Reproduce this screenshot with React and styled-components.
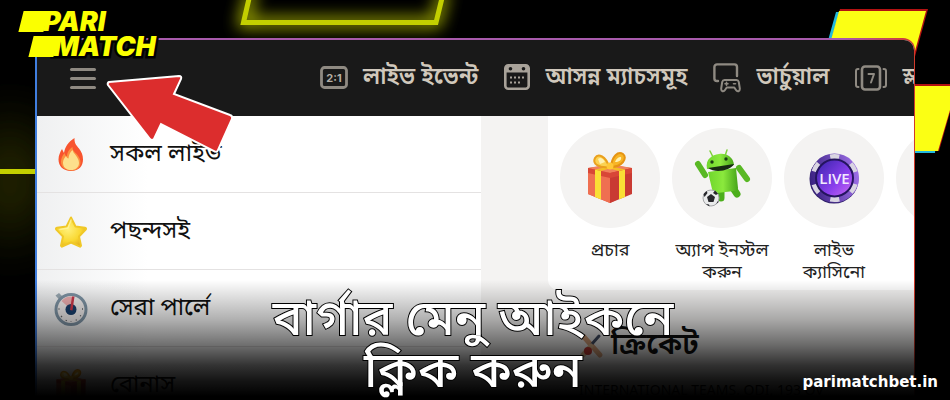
import React from "react";
import styled, { createGlobalStyle, css } from "styled-components";

const GlobalStyle = createGlobalStyle`
  * {
    box-sizing: border-box;
  }

  body {
    margin: 0;
    background: #000;
    font-family: "Noto Sans Bengali", "Noto Sans", "Open Sans", sans-serif;
  }

  ul {
    list-style: none;
    margin: 0;
    padding: 0;
  }

  a {
    color: inherit;
    text-decoration: none;
  }
`;

const Backdrop = () => (
  <BackdropArt viewBox="0 0 950 400" preserveAspectRatio="none" aria-hidden="true">
    <defs>
      <filter id="neon" x="-50%" y="-50%" width="200%" height="200%">
        <feGaussianBlur stdDeviation="8" />
      </filter>
      <filter id="haze" x="-100%" y="-100%" width="300%" height="300%">
        <feGaussianBlur stdDeviation="28" />
      </filter>
    </defs>
    <rect width="950" height="400" fill="#000" />
    <ellipse cx="10" cy="180" rx="34" ry="60" fill="#3a3c00" opacity="0.7" filter="url(#haze)" />
    <g fill="none" stroke="#c3cf00">
      <path d="M252-10 243.500 22.500H436L444-10" strokeWidth="10" filter="url(#neon)" opacity="0.9" />
      <path d="M251-10 243.500 22.500H436L444-10" strokeWidth="5" />
      <path d="M0 171.500H60" strokeWidth="5" />
    </g>
    <path d="M836 12 822 62H860V12Z" fill="#23b9dd" />
    <path d="M840 9H928L914 60H826Z" fill="#b31212" />
    <path d="M839 11H926L912 62H825Z" fill="#fbff14" />
    <path d="M900 84H958L939 151H900Z" fill="#b31212" />
    <path d="M900 120H937L935 153H900Z" fill="#23b9dd" />
    <path d="M900 86H957L938 151H900Z" fill="#fbff14" />
  </BackdropArt>
);

const ScoreIcon = () => (
  <svg width="28" height="24" viewBox="0 0 28 24" fill="none">
    <rect x="1.500" y="1.500" width="25" height="20" rx="3" stroke="#8f8a82" strokeWidth="2.800" />
    <text x="14" y="15.500" textAnchor="middle" fontFamily="Inter, sans-serif" fontSize="11" fontWeight="700" fill="#b5afa5">
      2:1
    </text>
  </svg>
);

const CalendarIcon = () => (
  <svg width="26" height="28" viewBox="0 0 26 28" fill="none">
    <rect x="1.300" y="1.300" width="23.400" height="23.400" rx="3" stroke="#a8a299" strokeWidth="2.600" />
    <path d="M1 8.500V4.500A3.500 3.500 0 0 1 4.500 1h17A3.500 3.500 0 0 1 25 4.500v4Z" fill="#a8a299" />
    <circle cx="6.500" cy="4.800" r="1.800" fill="#191919" />
    <circle cx="19.500" cy="4.800" r="1.800" fill="#191919" />
    <path d="M6 13.500h2m2 0h2m2 0h2m2 0h2M6 18.500h2m2 0h2m2 0h2" stroke="#a8a299" strokeWidth="2" />
  </svg>
);

const VirtualIcon = () => (
  <svg width="28" height="30" viewBox="0 0 28 30" fill="none" stroke="#8f8a82" strokeWidth="2.400" strokeLinecap="round" strokeLinejoin="round">
    <path d="M5 18H4a2.600 2.600 0 0 1-2.600-2.600V4A2.600 2.600 0 0 1 4 1.400h17.500A2.600 2.600 0 0 1 24 4v9" />
    <path d="M11.500 17h12c1.300 0 2 .800 2.300 2l1 6.500c.300 3-2.500 3.700-3.800 1.500l-1.700-2.500h-7.600L12 27c-1.300 2.200-4.100 1.500-3.800-1.500l1-6.500c.300-1.200 1-2 2.300-2Z" strokeWidth="2" />
    <path d="M12 20.800h3m-1.500-1.500v3M20.500 20.800h2" strokeWidth="1.600" />
  </svg>
);

const SlotIcon = () => (
  <svg width="32" height="26" viewBox="0 0 32 26" fill="none" stroke="#8f8a82" strokeLinecap="round">
    <rect x="7" y="1.500" width="18" height="23" rx="3" strokeWidth="2.600" />
    <path d="M3.500 4H3a2 2 0 0 0-2 2v14a2 2 0 0 0 2 2h.500M28.500 4h.500a2 2 0 0 1 2 2v14a2 2 0 0 1-2 2h-.500" strokeWidth="2" />
    <path d="M13.500 9H19l-3 8.500" strokeWidth="2" strokeLinejoin="round" />
  </svg>
);

const FireIcon = () => (
  <svg width="34" height="34" viewBox="0 0 34 34">
    <path d="M17 33C9 33 4.500 28 4.500 21.500c0-4 1.700-7.500 3.500-10.500.800 1.200 1.200 2.600 2 4C11 8.500 14.500 4 20.500 0c-.300 5.500 2 7.500 4.500 10.500 2.500 3.200 4 6.500 4 11C29 28 25 33 17 33Z" fill="#f8542e" />
    <path d="M17 32.500c-6 0-10-3.700-10-9 0-3.200 1.500-6 3.500-8.500.500 1.500 1 3 2.500 3.500C13 14 15.500 11 18.500 9c0 4 3 5.500 5 8 1.700 2.200 3 4.500 3 7.200 0 5-3.500 8.300-9.500 8.300Z" fill="#fb9140" />
    <path d="M17 32c-5 0-8-3-8-7.300 0-2.700 1.500-5 3-6.700.500 1.500 1.500 2.500 2.500 2.500.300-3.500 1.500-6.500 4-8.500.500 3.500 6.500 7 6.500 13 0 4.300-3.500 7-8 7Z" fill="#fddf8c" />
  </svg>
);

const StarIcon = () => (
  <svg width="34" height="34" viewBox="0 0 34 34">
    <defs>
      <radialGradient id="starFill" cx="0.4" cy="0.4" r="0.7">
        <stop offset="0" stopColor="#fff07a" />
        <stop offset="0.6" stopColor="#f9d832" />
        <stop offset="1" stopColor="#e0a71b" />
      </radialGradient>
    </defs>
    <path d="M17 2.500l4.500 9 9.500 1.200c1 .2 1.400 1.200.700 1.900L25 21.500l2 9.300-1 .900L17 27.500l-9 4.200-1-.900 2-9.300-6.700-6.900c-.700-.700-.300-1.700.700-1.900L12.500 11.500Z" fill="url(#starFill)" stroke="#f0c828" strokeWidth="2" strokeLinejoin="round" />
    <path d="M17 5l-3 8-8 1.500" fill="none" stroke="#fff6a6" strokeWidth="1.500" strokeLinecap="round" opacity="0.7" />
  </svg>
);

const WatchIcon = () => (
  <svg width="34" height="34" viewBox="0 0 34 34">
    <path d="M1.500 3.500 5 1l4 4-3.500 3Z" fill="#9aa9b3" />
    <circle cx="17" cy="17.500" r="15" fill="#f1eeee" stroke="#7e94a5" strokeWidth="3" />
    <path d="M17 17.500 7.500 9A13 13 0 0 1 19 4.700Z" fill="#efb0b2" />
    <path d="M7 24l1 1m4 4 .500-1M17 29.500V29m5.500-.500-.500-1m5-3.500-1-.500M4.500 17h1M29 17h-1" stroke="#5e6265" strokeWidth="1.300" />
    <circle cx="17" cy="17.500" r="5.500" fill="#183e6b" />
    <path d="M18 4.500h2.500L18.500 18.500l-2.500-.500Z" fill="#cc3649" />
  </svg>
);

const GiftIcon = ({ size = 34 }) => (
  <svg width={size} height={size} viewBox="0 0 52 52">
    <path d="M4 16 26 13l22 3v24L26 51 4 42Z" fill="#df4b3b" />
    <path d="M4 16 26 21v30L4 42Z" fill="#ef6f51" />
    <path d="M26 21 48 16v26L26 51Z" fill="#c93a33" />
    <path d="M4 16 26 12l22 4-22 5Z" fill="#f0805c" />
    <path d="M4 16 26 21 48 16v5L26 26 4 21Z" fill="#d84637" />
    <path d="M11 17.500 17 19v28.500L11 45ZM35 19l6-1.500V45l-6 2.500Z" fill="#fadf35" />
    <path d="M11 17.500 30 13.500h6L17 19ZM35 19 18 14.500l5-1L41 17.500Z" fill="#f4bd25" />
    <path d="M25 15C15 16 8 12 11 6c3-5 11-2 14 9Z" fill="#fbd252" stroke="#eaa01d" strokeWidth="2" />
    <path d="M27 15C28 4 34-1 39 2c5 4-1 13-12 13Z" fill="#f7b527" stroke="#e59413" strokeWidth="2" />
    <path d="M14 7c2-2 5-1 7 3l-5 2ZM31 10c1-3 3-5 6-5 1 3-2 5-6 5Z" fill="#fff1b0" />
    <circle cx="26" cy="14" r="3.500" fill="#ffc837" />
  </svg>
);

const RobotIcon = () => (
  <svg width="58" height="60" viewBox="0 0 58 60">
    <defs>
      <linearGradient id="robot" x2="1">
        <stop offset="0" stopColor="#6fd62c" />
        <stop offset="0.5" stopColor="#8be93d" />
        <stop offset="1" stopColor="#47a51a" />
      </linearGradient>
    </defs>
    <path d="M17 3 20 9M34 2 32 8" stroke="#7ed13a" strokeWidth="1.500" strokeLinecap="round" />
    <path d="M5 16 12 27M46 20 54 31" stroke="#59b824" strokeWidth="6" strokeLinecap="round" />
    <path d="M28 42V50M40 40l4 6" stroke="#4cae1c" strokeWidth="7" strokeLinecap="round" />
    <path d="M15 24 43 20 45 40Q45 43 41 43L24 45Q20 45 19 41Z" fill="url(#robot)" />
    <path d="M14 21C12 11 19 7 26 6c8-1 14 3 15 11Z" fill="url(#robot)" />
    <path d="M15 20 41 16c-3 6-18 10-26 4Z" fill="#172b12" />
    <circle cx="19" cy="14" r="1.700" fill="#1b3d12" />
    <circle cx="33" cy="11" r="1.700" fill="#1b3d12" />
    <circle cx="18" cy="50" r="8" fill="#e9eaeb" stroke="#a5a6a8" />
    <path d="m18 46 4 3-1.500 5h-5L14 49ZM10.500 46l3-3 1 2-3 4ZM22 42.500l3 3-2 1.500-3-2ZM13 56l3 .500.500 2ZM23 56l2-3 .700 1Z" fill="#27272b" />
  </svg>
);

const ChipIcon = () => (
  <svg width="52" height="52" viewBox="0 0 52 52">
    <defs>
      <linearGradient id="chip" x1="0" y1="0" x2="1" y2="1">
        <stop offset="0.1" stopColor="#4427b5" />
        <stop offset="0.6" stopColor="#8a3fed" />
        <stop offset="1" stopColor="#cf6cf4" />
      </linearGradient>
      <linearGradient id="chipEdge" x1="0" y1="0.5" x2="1" y2="0.3">
        <stop offset="0" stopColor="#3b2283" />
        <stop offset="1" stopColor="#a071ea" />
      </linearGradient>
    </defs>
    <circle cx="26" cy="27" r="24.500" fill="#30206a" />
    <circle cx="26.500" cy="26" r="24.500" fill="url(#chipEdge)" />
    <circle cx="26.500" cy="26" r="21" fill="none" stroke="#d9d5e2" strokeWidth="6" strokeDasharray="9 13" strokeDashoffset="-6" />
    <circle cx="26.500" cy="26" r="18.500" fill="url(#chip)" stroke="#24145f" strokeWidth="2" />
    <text x="26.500" y="31.500" textAnchor="middle" fontFamily="Open Sans, sans-serif" fontSize="15" fontWeight="600" fill="#f2eafe">
      LIVE
    </text>
  </svg>
);

const CricketIcon = () => (
  <svg width="26" height="26" viewBox="0 0 26 26">
    <path d="m5 4 16 18" stroke="#d9a27a" strokeWidth="5" strokeLinecap="round" />
    <path d="M20 3 12 12" stroke="#454f66" strokeWidth="3" strokeLinecap="round" />
    <path d="m12 13-8 9" stroke="#d9b58c" strokeWidth="5" strokeLinecap="round" />
    <circle cx="9" cy="18" r="4" fill="#c43a33" />
  </svg>
);

const Pointer = () => (
  <PointerArt width="136" height="84" viewBox="0 0 136 84" aria-hidden="true">
    <path
      d="M3 8 73 2Q76 2 75 5L68 20 124 41Q127 42 126 45L112 76Q111 79 108 77L55 50 48 65Q46 67 44 65L2 11Q1 9 3 8Z"
      fill="#dc2d2d"
      stroke="#fff"
      strokeWidth="2"
    />
  </PointerArt>
);

const navItems = [
  { label: "লাইভ ইভেন্ট", icon: <ScoreIcon /> },
  { label: "আসন্ন ম্যাচসমূহ", icon: <CalendarIcon /> },
  { label: "ভার্চুয়াল", icon: <VirtualIcon /> },
  { label: "স্লট", icon: <SlotIcon /> },
];

const menuItems = [
  { label: "সকল লাইভ", icon: <FireIcon /> },
  { label: "পছন্দসই", icon: <StarIcon /> },
  { label: "সেরা পার্লে", icon: <WatchIcon /> },
  { label: "বোনাস", icon: <GiftIcon /> },
];

const shortcuts = [
  { label: "প্রচার", icon: <GiftIcon size={52} /> },
  { label: "অ্যাপ ইনস্টল করুন", icon: <RobotIcon /> },
  { label: "লাইভ ক্যাসিনো", icon: <ChipIcon /> },
  { label: "", icon: null },
];

const App = () => {
  return (
    <Banner>
      <GlobalStyle />
      <Backdrop />
      <Frame>
        <Screen>
          <TopBar>
            <BurgerButton type="button" aria-label="Menu">
              <span />
              <span />
              <span />
            </BurgerButton>
            <Nav>
              {navItems.map((item) => (
                <NavLink href="#" key={item.label}>
                  {item.icon}
                  {item.label}
                </NavLink>
              ))}
            </Nav>
          </TopBar>
          <Content>
            <SideMenu>
              {menuItems.map((item) => (
                <li key={item.label}>
                  <MenuLink href="#">
                    {item.icon}
                    {item.label}
                  </MenuLink>
                </li>
              ))}
            </SideMenu>
            <Main>
              <Shortcuts>
                {shortcuts.map((item, index) => (
                  <Shortcut href="#" key={index}>
                    <Circle>{item.icon}</Circle>
                    {item.label}
                  </Shortcut>
                ))}
              </Shortcuts>
              <SportHeading>
                <CricketIcon />
                ক্রিকেট
              </SportHeading>
              <League>INTERNATIONAL TEAMS. ODI, 193 OV</League>
            </Main>
          </Content>
        </Screen>
      </Frame>
      <Pointer />
      <Logo href="#">
        <LogoRow>PARI</LogoRow>
        <LogoRow $indent>MATCH</LogoRow>
      </Logo>
      <Shade />
      <Caption>
        বার্গার মেনু আইকনে
        <br />
        ক্লিক করুন
      </Caption>
      <SiteLink href="#">parimatchbet.in</SiteLink>
    </Banner>
  );
};

const Banner = styled.div`
  position: relative;
  display: flex;
  height: 100vh;
  min-height: 400px;
  padding: 38px 35px 0;
  overflow: hidden;
`;

const BackdropArt = styled.svg`
  position: absolute;
  inset: 0;
  width: 100%;
  height: 100%;
`;

const Frame = styled.div`
  position: relative;
  flex: 1;
  min-width: 0;
  padding: 2px 1px 0 2px;
  border-radius: 0 12px 0 0;
  background: linear-gradient(90deg, #3f7fe0 0, #a85aac 8%, #a85aac 92%, #d23a2a 100%);
`;

const Screen = styled.div`
  display: flex;
  flex-direction: column;
  height: 100%;
  overflow: hidden;
  border-radius: 0 10px 0 0;
  background: #f4f3f2;
`;

const TopBar = styled.header`
  display: flex;
  flex: none;
  align-items: center;
  gap: 224px;
  height: 76px;
  padding-left: 33px;
  background: #191919;
`;

const BurgerButton = styled.button`
  display: flex;
  flex: none;
  flex-direction: column;
  gap: 6px;
  width: 26px;
  padding: 0;
  border: 0;
  background: none;

  span {
    height: 3px;
    border-radius: 2px;
    background: #8f8a82;
  }
`;

const Nav = styled.nav`
  display: flex;
  gap: 26px;
  min-width: 0;
  overflow: hidden;
`;

const NavLink = styled.a`
  display: flex;
  flex: none;
  align-items: center;
  gap: 15px;
  color: #d0c8bc;
  font-size: 23px;
  font-weight: 600;
  line-height: 36px;
  white-space: nowrap;
`;

const Content = styled.div`
  display: flex;
  flex: 1;
  gap: 67px;
  min-height: 0;
`;

const SideMenu = styled.ul`
  flex: 444 1 0;
  background: linear-gradient(90deg, #eff0f1, #fff 25%);
`;

const MenuLink = styled.a`
  display: flex;
  align-items: center;
  gap: 22px;
  height: 77px;
  padding: 2px 17px 0;
  border-bottom: 1px solid #e4e2e2;
  color: #111;
  font-size: 24px;
`;

const Main = styled.main`
  flex: 366 1 0;
  min-width: 0;
`;

const Shortcuts = styled.div`
  display: flex;
  gap: 12px;
  height: 174px;
  padding: 12px 0 0 12px;
  overflow: hidden;
  border-radius: 0 0 0 10px;
  background: #fff;
`;

const Shortcut = styled.a`
  flex: none;
  width: 100px;
  color: #222;
  font-size: 18px;
  line-height: 22px;
  text-align: center;
`;

const Circle = styled.div`
  display: flex;
  align-items: center;
  justify-content: center;
  height: 100px;
  margin-bottom: 12px;
  border-radius: 50%;
  background: #f4f3f2;
`;

const SportHeading = styled.h2`
  display: flex;
  align-items: center;
  gap: 6px;
  margin: 0;
  padding: 38px 0 0 31px;
  color: #0e0e0e;
  font-size: 30px;
  font-weight: 600;
  line-height: 36px;
`;

const League = styled.p`
  margin: 0;
  padding: 18px 0 0 31px;
  color: #000;
  font-size: 14px;
  line-height: 20px;
`;

const PointerArt = styled.svg`
  position: absolute;
  top: 74px;
  left: 106px;
`;

const Logo = styled.a`
  position: absolute;
  top: 9px;
  left: 21px;
  color: #fbff00;
  font-family: Inter, sans-serif;
  font-size: 27px;
  font-style: italic;
  font-weight: 900;
  line-height: 25px;
  -webkit-text-stroke: 5px #000;
  paint-order: stroke fill;
`;

/* the slanted slab sits above the text outline so it joins the first letter */
const LogoRow = styled.span`
  display: flex;
  align-items: center;

  &::before {
    content: "";
    width: 25px;
    height: 21px;
    margin-right: -3px;
    background: currentColor;
    transform: skewX(-14deg);
  }

  ${({ $indent }) =>
    $indent &&
    css`
      margin-left: 10px;
    `}
`;

const Shade = styled.div`
  position: absolute;
  inset: auto 0 0;
  height: 120px;
  background: linear-gradient(
    transparent,
    rgba(0, 0, 0, 0.31) 33%,
    rgba(0, 0, 0, 0.56) 54%,
    rgba(0, 0, 0, 0.8) 71%,
    rgba(0, 0, 0, 0.92) 84%,
    #000 97%
  );
  pointer-events: none;
`;

const Caption = styled.h1`
  position: absolute;
  inset: auto 0 0;
  margin: 0;
  padding-right: 4px;
  color: #fff;
  font-size: 50px;
  font-weight: 500;
  line-height: 52px;
  text-align: center;
  -webkit-text-stroke: 2px #000;
  paint-order: stroke fill;
  pointer-events: none;
`;

const SiteLink = styled.a`
  position: absolute;
  right: 12px;
  bottom: 8px;
  color: #fff;
  font-family: "DejaVu Sans", sans-serif;
  font-size: 15px;
  font-weight: 700;
  line-height: 20px;
`;

export default App;
